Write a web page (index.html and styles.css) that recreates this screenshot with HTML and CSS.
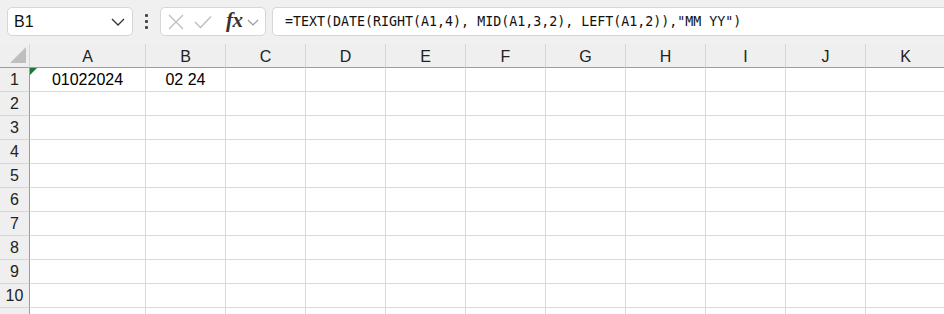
FILE: index.html
```html
<!DOCTYPE html>
<html>
<head>
<meta charset="utf-8">
<link rel="stylesheet" href="styles.css">
</head>
<body>
<div class="app">
  <div class="toolbar">
    <div class="namebox">
      <span class="name">B1</span>
      <svg class="chev" width="14" height="8" viewBox="0 0 14 8"><path d="M1 1 L7 7 L13 1" fill="none" stroke="#333" stroke-width="1.3"/></svg>
    </div>
    <div class="dots"><span></span><span></span><span></span></div>
    <div class="fxbox">
      <svg class="ico" width="16" height="16" viewBox="0 0 16 16"><path d="M1 1 L15 15 M15 1 L1 15" stroke="#bdbdbd" stroke-width="1.3" fill="none"/></svg>
      <svg class="ico check" width="18" height="14" viewBox="0 0 18 14"><path d="M1 7 L6.5 12.5 L17 1.5" stroke="#bdbdbd" stroke-width="1.3" fill="none"/></svg>
      <span class="fx">fx</span>
      <svg class="chev2" width="12" height="7" viewBox="0 0 12 7"><path d="M1 1 L6 6 L11 1" fill="none" stroke="#999" stroke-width="1.2"/></svg>
    </div>
    <div class="formula">=TEXT(DATE(RIGHT(A1,4), MID(A1,3,2), LEFT(A1,2)),"MM YY")</div>
  </div>
  <div class="grid">
    <div class="corner"><svg width="30" height="23" viewBox="0 0 30 23"><path d="M26 3 L26 19 L10 19 Z" fill="#bfbfbf"/></svg></div>
    <div class="ch">A</div><div class="ch">B</div><div class="ch">C</div><div class="ch">D</div><div class="ch">E</div><div class="ch">F</div><div class="ch">G</div><div class="ch">H</div><div class="ch">I</div><div class="ch">J</div><div class="ch">K</div>

    <div class="rh">1</div><div class="c warn">01022024</div><div class="c">02 24</div><div class="c"></div><div class="c"></div><div class="c"></div><div class="c"></div><div class="c"></div><div class="c"></div><div class="c"></div><div class="c"></div><div class="c"></div>
    <div class="rh">2</div><div class="c"></div><div class="c"></div><div class="c"></div><div class="c"></div><div class="c"></div><div class="c"></div><div class="c"></div><div class="c"></div><div class="c"></div><div class="c"></div><div class="c"></div>
    <div class="rh">3</div><div class="c"></div><div class="c"></div><div class="c"></div><div class="c"></div><div class="c"></div><div class="c"></div><div class="c"></div><div class="c"></div><div class="c"></div><div class="c"></div><div class="c"></div>
    <div class="rh">4</div><div class="c"></div><div class="c"></div><div class="c"></div><div class="c"></div><div class="c"></div><div class="c"></div><div class="c"></div><div class="c"></div><div class="c"></div><div class="c"></div><div class="c"></div>
    <div class="rh">5</div><div class="c"></div><div class="c"></div><div class="c"></div><div class="c"></div><div class="c"></div><div class="c"></div><div class="c"></div><div class="c"></div><div class="c"></div><div class="c"></div><div class="c"></div>
    <div class="rh">6</div><div class="c"></div><div class="c"></div><div class="c"></div><div class="c"></div><div class="c"></div><div class="c"></div><div class="c"></div><div class="c"></div><div class="c"></div><div class="c"></div><div class="c"></div>
    <div class="rh">7</div><div class="c"></div><div class="c"></div><div class="c"></div><div class="c"></div><div class="c"></div><div class="c"></div><div class="c"></div><div class="c"></div><div class="c"></div><div class="c"></div><div class="c"></div>
    <div class="rh">8</div><div class="c"></div><div class="c"></div><div class="c"></div><div class="c"></div><div class="c"></div><div class="c"></div><div class="c"></div><div class="c"></div><div class="c"></div><div class="c"></div><div class="c"></div>
    <div class="rh">9</div><div class="c"></div><div class="c"></div><div class="c"></div><div class="c"></div><div class="c"></div><div class="c"></div><div class="c"></div><div class="c"></div><div class="c"></div><div class="c"></div><div class="c"></div>
    <div class="rh">10</div><div class="c"></div><div class="c"></div><div class="c"></div><div class="c"></div><div class="c"></div><div class="c"></div><div class="c"></div><div class="c"></div><div class="c"></div><div class="c"></div><div class="c"></div>
    <div class="rh"></div><div class="c"></div><div class="c"></div><div class="c"></div><div class="c"></div><div class="c"></div><div class="c"></div><div class="c"></div><div class="c"></div><div class="c"></div><div class="c"></div><div class="c"></div>
  </div>
</div>
</body>
</html>
```

FILE: styles.css
```css
* { box-sizing: border-box; }
html, body { margin: 0; padding: 0; background: #fff; }
body { width: 944px; height: 314px; overflow: hidden; font-family: "Liberation Sans", Arial, sans-serif; color: #000; }
.app { width: 944px; height: 314px; overflow: hidden; }

.toolbar {
  height: 44px;
  background: #f0f0f0;
  display: flex;
  align-items: flex-start;
  padding-top: 7px;
  padding-left: 7px;
}
.namebox {
  width: 126px;
  height: 29px;
  background: #fff;
  border: 1px solid #d6d6d6;
  border-radius: 5px;
  display: flex;
  align-items: center;
  justify-content: space-between;
  padding: 0 7px 0 6px;
}
.name { font-size: 16px; color: #111; }
.chev { margin-top: 1px; }
.dots {
  width: 27px;
  height: 29px;
  display: flex;
  flex-direction: column;
  align-items: center;
  justify-content: center;
  gap: 3px;
}
.dots span { width: 3px; height: 3px; background: #444; border-radius: 1px; }
.fxbox {
  width: 106px;
  height: 29px;
  background: #fff;
  border: 1px solid #d6d6d6;
  border-radius: 5px;
  display: flex;
  align-items: center;
  padding-left: 7px;
}
.ico { flex: none; }
.check { margin-left: 10px; }
.fx {
  font-family: "Liberation Serif", "Times New Roman", serif;
  font-style: italic;
  font-weight: bold;
  font-size: 21px;
  color: #333;
  margin-left: 14px;
  margin-top: -3px;
  letter-spacing: -0.5px;
}
.chev2 { margin-left: 4px; margin-top: 2px; }
.formula {
  flex: 1;
  margin-left: 6px;
  height: 29px;
  background: #fff;
  border: 1px solid #d6d6d6;
  border-right: none;
  border-radius: 5px 0 0 5px;
  font-family: "DejaVu Sans Mono", "Liberation Mono", monospace;
  font-size: 13.3px;
  line-height: 27px;
  padding-left: 12px;
  color: #111;
  white-space: nowrap;
}

.grid {
  display: grid;
  grid-template-columns: 30px 116px repeat(10, 80px);
  grid-auto-rows: 24px;
  width: 1000px;
}
.corner {
  background: #efefef;
  border-right: 1px solid #d6d6d6;
  border-bottom: 1px solid #9c9c9c;
  height: 24px;
}
.corner svg { display: block; }
.ch {
  background: #efefef;
  border-right: 1px solid #d6d6d6;
  border-bottom: 1px solid #9c9c9c;
  font-size: 16px;
  color: #222;
  text-align: center;
  line-height: 24px;
  padding-top: 1px;
}
.rh {
  background: #efefef;
  border-right: 1px solid #9c9c9c;
  border-bottom: 1px solid #d6d6d6;
  font-size: 16px;
  color: #222;
  text-align: center;
  line-height: 23px;
}
.c {
  border-right: 1px solid #dadada;
  border-bottom: 1px solid #dadada;
  font-size: 16px;
  text-align: center;
  line-height: 23px;
  position: relative;
}
.warn::before {
  content: "";
  position: absolute;
  left: 0;
  top: 0;
  border-top: 7px solid #1a7a35;
  border-right: 7px solid transparent;
}
```
